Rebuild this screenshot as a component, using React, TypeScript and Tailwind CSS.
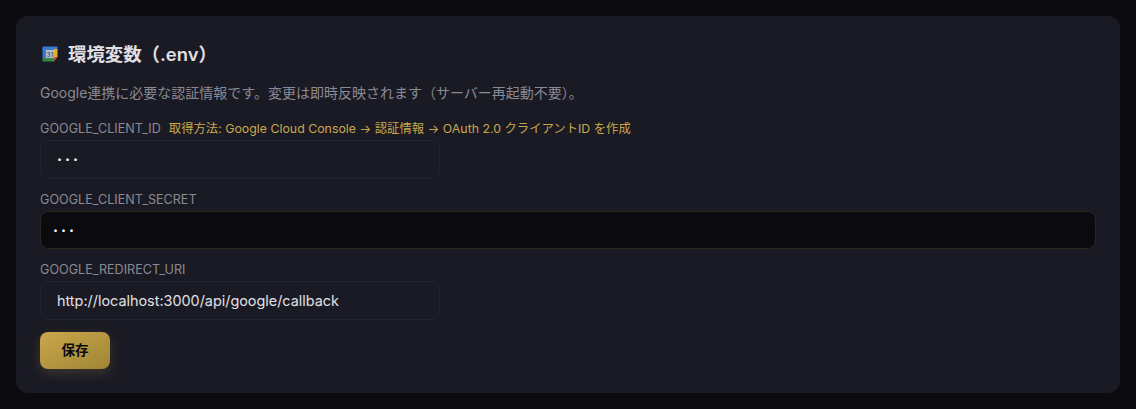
const font = 'font-["Inter","Noto_Sans_CJK_JP",sans-serif]'

function CalendarIcon() {
  return (
    <svg width="16" height="16" viewBox="0 0 16 16" className="shrink-0">
      <path d="M1 0.5h14l0.5 0.5v3H0.5V1z" fill="#3b78d0" />
      <rect x="0.5" y="3" width="3.5" height="9" fill="#3b78d0" />
      <rect x="12" y="3" width="3.5" height="8" fill="#e0ae30" />
      <path d="M0.5 12H12v3.5H1l-0.5-0.5z" fill="#2f8a4c" />
      <path d="M12 11h3.5L12 15.5z" fill="#c9503f" />
      <rect x="4" y="4" width="8" height="8" fill="#b9bdc6" />
      <text x="8" y="10.6" textAnchor="middle" fontSize="6.5" fill="#4a5f80" fontFamily="Inter, sans-serif">31</text>
    </svg>
  )
}

export default function App() {
  return (
    <div className={`${font} min-h-[409px] bg-[#0a0a0f] p-4`}>
      <section className="flex h-[377px] flex-col rounded-xl bg-[#1a1a24] px-6 pt-6">
        <h2 className="flex h-7 items-center gap-2.5 pl-0.5 text-[18.4px] leading-7 font-semibold text-[#e0e0e4]">
          <CalendarIcon />
          環境変数（.env）
        </h2>
        <p className="mt-[15px] text-sm leading-5 text-[#8a8a94]">
          Google連携に必要な認証情報です。変更は即時反映されます（サーバー再起動不要）。
        </p>

        <div className="mt-[16px] flex h-[20px] items-center gap-2 leading-5">
          <label className="text-[12.6px] text-[#8a8a94]">GOOGLE_CLIENT_ID</label>
          <span className="text-[12.35px] text-[#c9a84c]">取得方法: Google Cloud Console → 認証情報 → OAuth 2.0 クライアントID を作成</span>
        </div>
        <input
          type="text"
          readOnly
          value="···"
          className="mt-[1px] h-[39px] w-[400px] rounded-lg border border-[#24242e] bg-[#1a1a24] px-4 text-[15px] font-bold tracking-[3px] text-white outline-none"
        />

        <label className="mt-[11px] h-[20px] text-[12.6px] leading-5 text-[#8a8a94]">GOOGLE_CLIENT_SECRET</label>
        <input
          type="text"
          readOnly
          value="···"
          className="mt-[1px] h-[38px] w-full rounded-lg border border-[#2a2620] bg-[#0a0a0f] px-3 text-[15px] font-bold tracking-[3px] text-white outline-none"
        />

        <label className="mt-[11px] h-[20px] text-[12.6px] leading-5 text-[#8a8a94]">GOOGLE_REDIRECT_URI</label>
        <input
          type="text"
          readOnly
          value="http://localhost:3000/api/google/callback"
          className="mt-[1px] h-[39px] w-[400px] rounded-lg border border-[#24242e] bg-[#1a1a24] px-4 text-[14.4px] text-[#e0e0e4] outline-none"
        />

        <button className="mt-3 h-[37px] w-[70px] rounded-lg bg-gradient-to-br from-[#c9a84c] to-[#a08535] text-[13.6px] font-semibold text-[#0a0a0f] shadow-[0_4px_12px_rgba(201,168,76,0.2)]">
          保存
        </button>
      </section>
    </div>
  )
}
